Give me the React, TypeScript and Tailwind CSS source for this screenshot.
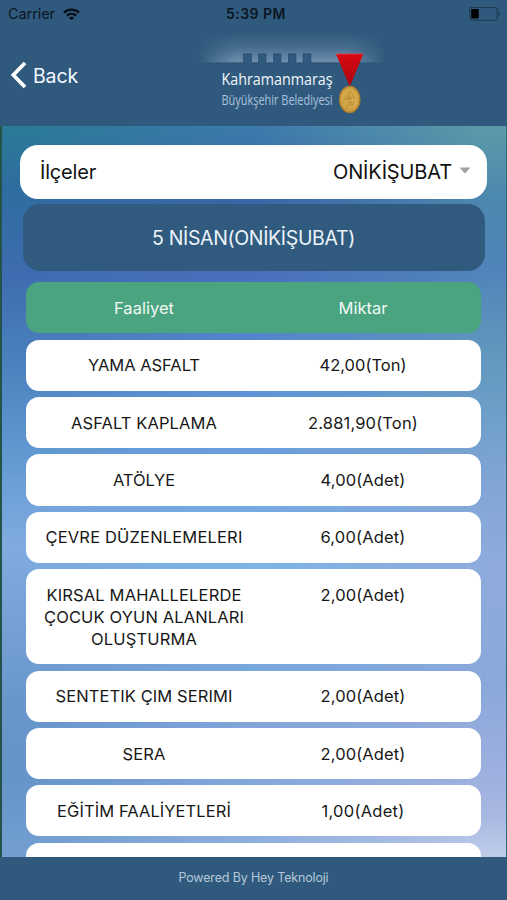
import React from "react";

type Row = { lines: { text: string; width: number }[]; amount: string; amountWidth: number };

const rows: Row[] = [
  { lines: [{ text: "YAMA ASFALT", width: 112 }], amount: "42,00(Ton)", amountWidth: 87 },
  { lines: [{ text: "ASFALT KAPLAMA", width: 146 }], amount: "2.881,90(Ton)", amountWidth: 110 },
  { lines: [{ text: "ATÖLYE", width: 62 }], amount: "4,00(Adet)", amountWidth: 85 },
  { lines: [{ text: "ÇEVRE DÜZENLEMELERI", width: 197 }], amount: "6,00(Adet)", amountWidth: 85 },
  {
    lines: [
      { text: "KIRSAL MAHALLELERDE", width: 195 },
      { text: "ÇOCUK OYUN ALANLARI", width: 200 },
      { text: "OLUŞTURMA", width: 106 },
    ],
    amount: "2,00(Adet)",
    amountWidth: 85,
  },
  { lines: [{ text: "SENTETIK ÇIM SERIMI", width: 177 }], amount: "2,00(Adet)", amountWidth: 85 },
  { lines: [{ text: "SERA", width: 43 }], amount: "2,00(Adet)", amountWidth: 85 },
  { lines: [{ text: "EĞİTİM FAALİYETLERİ", width: 174 }], amount: "1,00(Adet)", amountWidth: 83 },
];

// Text whose letter spacing is fitted to a given advance width.
function Fit({ text, width }: { text: string; width: number }) {
  const ref = React.useRef<HTMLSpanElement>(null);
  const [spacing, setSpacing] = React.useState(0);
  React.useLayoutEffect(() => {
    if (ref.current) {
      const natural = ref.current.getBoundingClientRect().width;
      setSpacing((width - natural) / text.length);
    }
  }, [text, width]);
  return (
    <span ref={ref} className="inline-block whitespace-nowrap" style={{ letterSpacing: spacing }}>
      {text}
    </span>
  );
}

function Logo() {
  return (
    <svg width="200" height="90" viewBox="0 0 200 90" className="block">
      <defs>
        <linearGradient id="glowY" x1="0" y1="0" x2="0" y2="1">
          <stop offset="0" stopColor="#b6cbe6" stopOpacity="0" />
          <stop offset="0.5" stopColor="#b6cbe6" stopOpacity="0.18" />
          <stop offset="1" stopColor="#b6cbe6" stopOpacity="0.48" />
        </linearGradient>
        <linearGradient id="fadeX" x1="0" y1="0" x2="1" y2="0">
          <stop offset="0" stopColor="#fff" stopOpacity="0" />
          <stop offset="0.2" stopColor="#fff" />
          <stop offset="0.8" stopColor="#fff" />
          <stop offset="1" stopColor="#fff" stopOpacity="0" />
        </linearGradient>
        <mask id="side">
          <rect x="8" y="0" width="187" height="40" fill="url(#fadeX)" />
        </mask>
        <linearGradient id="ribbon" x1="0" y1="0" x2="0" y2="1">
          <stop offset="0" stopColor="#d90812" />
          <stop offset="1" stopColor="#a80812" />
        </linearGradient>
        <radialGradient id="gold">
          <stop offset="0" stopColor="#c79a3c" />
          <stop offset="0.7" stopColor="#d8aa4a" />
          <stop offset="1" stopColor="#b1802c" />
        </radialGradient>
      </defs>
      <g mask="url(#side)">
        <path
          fill="url(#glowY)"
          d="M8 3H195V32.5H121V23.5H113V32.5H106V23.5H98.500V32.500H91V23.500H83.500V32.500H76V23.500H68.500V32.500H61.500V23.500H53.500V32.500H8Z"
        />
        <path
          fill="none"
          stroke="#21466b"
          strokeOpacity="0.55"
          strokeWidth="1"
          d="M8 33H53.5V24H61.5V33H68.5V24H76V33H83.5V24H91V33H98.5V24H106V33H113V24H121V33H195"
        />
      </g>
      <text x="31.500" y="55" fill="#f2f6fb" fontFamily="'Open Sans', sans-serif" fontSize="16" textLength="111" lengthAdjust="spacingAndGlyphs">Kahramanmaraş</text>
      <text x="31.500" y="75" fill="#a8c0dc" fontFamily="'Open Sans', sans-serif" fontSize="14" textLength="111" lengthAdjust="spacingAndGlyphs">Büyükşehir Belediyesi</text>
      <path d="M146 24H173.300L160.500 55H159Z" fill="url(#ribbon)" />
      <path d="M146 24H173.300" stroke="#f0444a" strokeWidth="0.8" />
      <ellipse cx="159.700" cy="69.400" rx="10.500" ry="13.500" fill="url(#gold)" stroke="#a8782a" strokeWidth="0.7" />
      <ellipse cx="159.700" cy="69.400" rx="8.600" ry="11.500" fill="none" stroke="#e8c56c" strokeWidth="0.6" strokeDasharray="2 1.500" opacity="0.6" />
      <path d="M153 74L156 64L160 61L165 68L163 75L156 76M156 69L164 67M158 65L161 75M155 78L163 79" fill="none" stroke="#966a22" strokeWidth="0.7" opacity="0.5" />
      <path d="M154 67L158 62M161 64L166 73M153 71L166 70M158 79L162 76" fill="none" stroke="#edcb73" strokeWidth="0.7" opacity="0.6" />
    </svg>
  );
}

export default function App() {
  return (
    <div className="flex h-[900px] w-[507px] flex-col overflow-hidden bg-[#305a7d] font-['Inter','Noto_Sans',sans-serif]">
      <header className="h-[125.500px] shrink-0">
        <div className="grid h-7 grid-cols-3 items-center pr-1.5 pl-2 text-[#0a1623]">
          <div className="flex items-center gap-2 text-[14.500px] leading-7">
            <Fit text="Carrier" width={47} />
            <svg width="17" height="12.500" viewBox="0 0 17 12.500" fill="none" stroke="#050c14" strokeWidth="2.300">
              <path d="M1 4.700C5.200 0.700 11.800 0.700 16 4.700" />
              <path d="M3.800 7.700C6.500 5.200 10.500 5.200 13.200 7.700" />
              <path d="M8.500 12.300L5.900 9.700C7.400 8.400 9.600 8.400 11.100 9.700Z" fill="#050c14" stroke="none" />
            </svg>
          </div>
          <div className="pl-[3px] text-center text-[14px] leading-7 font-semibold">
            <Fit text="5:39 PM" width={60} />
          </div>
          <div className="flex justify-end">
            <svg width="32" height="15" viewBox="0 0 32 15">
              <rect x="0.700" y="0.400" width="27.600" height="12.800" rx="2.600" fill="none" stroke="#1d3a54" strokeWidth="1.100" />
              <rect x="2.200" y="2" width="7.500" height="9.600" rx="1" fill="#000" />
              <path d="M29.500 4.500C31.500 5 31.500 8.700 29.500 9.200Z" fill="#1d3a54" />
            </svg>
          </div>
        </div>
        <div className="flex pl-[10px]">
          <div className="flex h-[94px] w-[180px] items-center gap-[6px] text-[19.500px] text-[#f5f9fd]">
            <svg width="17" height="27" viewBox="0 0 17 27" fill="none" stroke="#fff" strokeWidth="3.700">
              <path d="M15 1L3.300 13L15 25" />
            </svg>
            <div className="pt-[3px]">
              <Fit text="Back" width={45} />
            </div>
          </div>
          <div className="pt-[2px]">
            <Logo />
          </div>
        </div>
      </header>

      <main className="relative min-h-0 flex-1 overflow-hidden border-r border-l-[2.500px] border-r-[#316878] border-l-[#235349] bg-[linear-gradient(180deg,#3d7aac_0px,#3b65a9_75px,#4a70bc_150px,#5585cb_210px,#6094d8_270px,#76aae2_380px,#7db4e6_440px,#78a8de_540px,#84a5da_600px,#84a8dc_655px,#91b1df_731px)]">
        <div className="absolute inset-0 bg-[linear-gradient(180deg,#2a7b96_0px,#2f6ca0_65px,#3f6cb0_150px,#4a80bd_235px,#6098d0_325px,#80abe0_420px,#739fd5_510px,#6896cb_580px,#6594c9_650px,#739fd0_731px)] [mask-image:linear-gradient(90deg,#000_4%,transparent_50%)]" />
        <div className="absolute inset-0 bg-[linear-gradient(180deg,#5d9aa8_0px,#4d88ae_70px,#5084ba_145px,#6096bc_220px,#6e9fc8_290px,#83a6d7_365px,#8fabdc_440px,#8aa8da_560px,#9eb0df_650px,#a9b8e1_690px,#bfcdea_731px)] [mask-image:linear-gradient(270deg,#000_4%,transparent_50%)]" />
        <div className="relative flex flex-col items-center pr-px">
          <div className="mt-[19.500px] flex h-[54px] w-[467px] shrink-0 items-center rounded-[18px] bg-white pr-[16px] pl-[20px] text-[20px] text-[#111]">
            <Fit text="İlçeler" width={56} />
            <span className="ml-auto">
              <Fit text="ONİKİŞUBAT" width={119} />
            </span>
            <svg width="12" height="7" viewBox="0 0 12 7" className="mb-1 ml-[7px]">
              <path d="M0.500 0.500H11.500L6 6.500Z" fill="#a0a0a0" />
            </svg>
          </div>
          <div className="mt-[5px] flex h-[67px] w-[462px] shrink-0 items-center justify-center rounded-[17px] bg-[#305b7e] pt-[2px] text-[19.500px] text-[#ecf3fa]">
            <Fit text="5 NİSAN(ONİKİŞUBAT)" width={203} />
          </div>
          <div className="mt-[11.300px] flex w-[455px] flex-col gap-[6.200px] text-[16.500px] leading-[22px] text-[#171717]">
            <div className="grid h-[51.200px] grid-cols-2 items-center rounded-[13px] bg-[#4ba480] px-[8.500px] text-center text-[#f1faf5]">
              <div>
                <Fit text="Faaliyet" width={60} />
              </div>
              <div>
                <Fit text="Miktar" width={49} />
              </div>
            </div>
            {rows.map((row) => (
              <div key={row.lines[0].text} className="grid grid-cols-2 rounded-[13px] bg-white px-[8.500px] py-[14.600px] text-center">
                <div className="flex flex-col items-center">
                  {row.lines.map((line) => (
                    <Fit key={line.text} text={line.text} width={line.width} />
                  ))}
                </div>
                <div>
                  <Fit text={row.amount} width={row.amountWidth} />
                </div>
              </div>
            ))}
            <div className="h-[51.200px] rounded-[13px] bg-white" />
          </div>
        </div>
      </main>

      <footer className="flex h-[43px] shrink-0 items-center justify-center bg-[#305a7d] text-[12.500px] text-[#b4c8da]">
        <Fit text="Powered By Hey Teknoloji" width={150} />
      </footer>
    </div>
  );
}
